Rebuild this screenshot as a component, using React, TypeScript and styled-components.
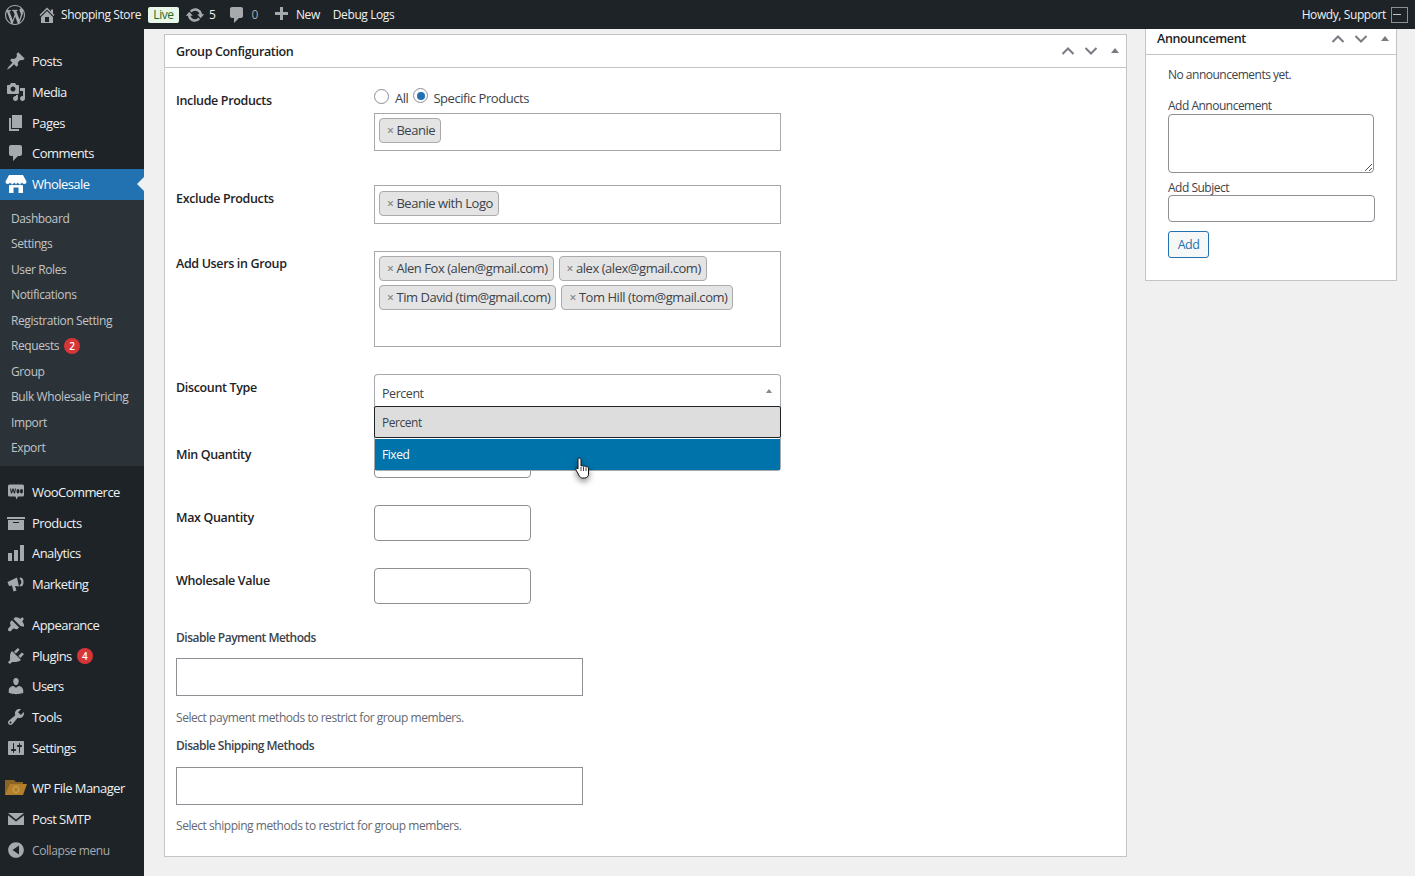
import React from "react";
import styled, { createGlobalStyle } from "styled-components";

const GlobalStyle = createGlobalStyle`
  html, body {
    margin: 0;
    padding: 0;
    height: 100%;
    background: #f0f0f1;
  }
  body {
    font-family: "Open Sans", "Noto Sans", "Liberation Sans", sans-serif;
    font-size: 13px;
    letter-spacing: -0.45px;
    color: #3c434a;
    overflow: hidden;
  }
  * { box-sizing: border-box; }
`;

const Page = styled.div`
  width: 1415px;
  height: 876px;
  overflow: hidden;
  position: relative;
`;

/* admin bar */
const AdminBar = styled.div`
  height: 29px;
  background: #1d2327;
  display: flex;
  align-items: center;
  padding: 0 7px 0 5px;
  color: #f0f0f1;
  font-size: 12px;
  letter-spacing: -0.4px;
`;
const BarItem = styled.div<{ $gap?: number; $left?: number }>`
  display: flex;
  align-items: center;
  gap: ${(p) => p.$gap ?? 5}px;
  margin-left: ${(p) => p.$left ?? 0}px;
  white-space: nowrap;
`;
const BarMuted = styled.span`
  color: #a7aaad;
`;
const LiveBadge = styled.span`
  background: #e9f6ea;
  color: #1e6b2a;
  border-radius: 2px;
  height: 16px;
  width: 31px;
  line-height: 15px;
  text-align: center;
  margin-left: 7px;
`;
const Spacer = styled.div`
  flex: 1;
`;
const Avatar = styled.div`
  width: 17px;
  height: 16px;
  border: 1px solid #8c8f94;
  background: #1d2327;
  display: flex;
  align-items: center;
  padding-left: 1px;
  margin-left: 5px;
  &::before {
    content: "";
    width: 8px;
    height: 1px;
    background: #c3c4c7;
  }
`;

const Body = styled.div`
  display: flex;
  height: 847px;
`;

/* sidebar */
const Sidebar = styled.nav`
  width: 144px;
  flex-shrink: 0;
  background: #1d2327;
  padding-top: 16.75px;
`;
const MenuItem = styled.div<{ $active?: boolean; $gapTop?: number; $muted?: boolean }>`
  height: 30.75px;
  margin-top: ${(p) => p.$gapTop ?? 0}px;
  display: flex;
  align-items: center;
  position: relative;
  background: ${(p) => (p.$active ? "#2271b1" : "transparent")};
  color: ${(p) => (p.$active ? "#fff" : p.$muted ? "#a7aaad" : "#f0f0f1")};
  font-size: ${(p) => (p.$muted ? 12 : 13)}px;
  letter-spacing: ${(p) => (p.$muted ? -0.4 : -0.55)}px;
  ${(p) =>
    p.$active &&
    `&::after {
      content: "";
      position: absolute;
      right: 0;
      top: 50%;
      margin-top: -7px;
      border: 7px solid transparent;
      border-right-color: #f0f0f1;
      border-left: 0;
    }`}
`;
const MenuIcon = styled.span`
  width: 32px;
  height: 20px;
  flex-shrink: 0;
  display: flex;
  justify-content: center;
`;
const CollapseLabel = styled.span`
  margin-top: 2px;
`;
const Count = styled.span`
  width: 16px;
  height: 16px;
  border-radius: 50%;
  background: #d63638;
  color: #fff;
  font-size: 10px;
  font-weight: 600;
  line-height: 16px;
  text-align: center;
  letter-spacing: 0;
  margin-left: 5px;
`;
const SubMenu = styled.div`
  background: #2c3338;
  padding: 5.85px 0 5.65px;
  margin-bottom: 10.4px;
`;
const SubItem = styled.div`
  height: 25.5px;
  padding-left: 11px;
  display: flex;
  align-items: center;
  color: #c3c4c7;
  font-size: 12px;
  letter-spacing: -0.4px;
`;

/* content */
const Content = styled.main`
  flex: 1;
  display: flex;
  align-items: flex-start;
  padding-left: 20px;
  gap: 18px;
`;
const MainBox = styled.section`
  width: 963px;
  height: 823px;
  margin-top: 5px;
  background: #fff;
  border: 1px solid #c3c4c7;
`;
const SideBox = styled.aside`
  width: 252px;
  height: 252px;
  background: #fff;
  border: 1px solid #c3c4c7;
  border-top: 0;
`;
const BoxHeader = styled.header<{ $height: number; $lift?: number }>`
  height: ${(p) => p.$height}px;
  display: flex;
  align-items: center;
  border-bottom: 1px solid #c3c4c7;
  padding: 0 6px ${(p) => p.$lift ?? 0}px 11px;
  color: #1d2327;
  font-weight: 600;
  font-size: 12.5px;
  letter-spacing: -0.35px;
`;
const Handles = styled.div`
  margin-left: auto;
  display: flex;
  align-items: center;
  gap: 9px;
`;
const FormBody = styled.div`
  padding: 0 11px;
`;
const Row = styled.div<{ $top: number }>`
  display: grid;
  grid-template-columns: 198px 407px;
  margin-top: ${(p) => p.$top}px;
`;
const RowLabel = styled.label<{ $offset: number }>`
  font-weight: 600;
  font-size: 12.5px;
  letter-spacing: -0.35px;
  color: #1d2327;
  padding-top: ${(p) => p.$offset}px;
  line-height: 16px;
`;
const RadioLine = styled.div`
  display: flex;
  align-items: flex-start;
  height: 25px;
  color: #3c434a;
`;
const Radio = styled.span<{ $checked?: boolean; $raise?: number }>`
  width: 15px;
  height: 15px;
  border-radius: 50%;
  border: 1px solid #8c8f94;
  background: #fff;
  position: relative;
  top: ${(p) => 1 - (p.$raise ?? 0)}px;
  margin-right: ${(p) => (p.$checked ? 5 : 6)}px;
  ${(p) =>
    p.$checked &&
    `&::before {
      content: "";
      position: absolute;
      left: 2.5px;
      top: 2.5px;
      width: 8px;
      height: 8px;
      border-radius: 50%;
      background: #2271b1;
    }`}
`;
const RadioText = styled.span`
  line-height: 18px;
  margin-top: 1px;
  margin-right: 5px;
`;
const TagBox = styled.div<{ $height: number; $padTop?: number }>`
  height: ${(p) => p.$height}px;
  border: 1px solid #a7aaad;
  background: #fff;
  padding: ${(p) => p.$padTop ?? 4}px 4px 4px;
  display: flex;
  flex-wrap: wrap;
  align-content: flex-start;
  gap: 4px 5px;
`;
const Tag = styled.span`
  height: 25px;
  background: #e4e4e4;
  border: 1px solid #aaa;
  border-radius: 4px;
  padding: 0 5px 0 7px;
  display: flex;
  align-items: center;
  line-height: 1;
  color: #3c434a;
`;
const TagX = styled.span`
  color: #888;
  font-size: 12px;
  margin-right: 3px;
  font-weight: 600;
`;
const SelectWrap = styled.div`
  position: relative;
  height: 32px;
`;
const SelectHead = styled.div`
  height: 32px;
  border: 1px solid #a7aaad;
  border-bottom: 0;
  border-radius: 4px 4px 0 0;
  background: #fff;
  padding: 6px 8px 0 7px;
  display: flex;
  align-items: center;
  justify-content: space-between;
  font-size: 12.5px;
`;
const Caret = styled.span`
  width: 0;
  height: 0;
  border: 3px solid transparent;
  border-bottom: 4px solid #888;
  border-top: 0;
  position: relative;
  top: -3px;
`;
const Dropdown = styled.div`
  position: absolute;
  left: 0;
  right: 0;
  top: 32px;
  height: 65px;
  background: #fff;
  border: 1px solid #a7aaad;
  border-top: 0;
  border-radius: 0 0 4px 4px;
  z-index: 2;
  font-size: 12px;
`;
const Option = styled.div<{ $focus?: boolean; $hover?: boolean }>`
  height: ${(p) => (p.$focus ? 32 : 31)}px;
  display: flex;
  align-items: center;
  padding-left: 7px;
  margin-bottom: ${(p) => (p.$focus ? 1 : 0)}px;
  background: ${(p) => (p.$hover ? "#0073aa" : "#ddd")};
  color: ${(p) => (p.$hover ? "#fff" : "#3c434a")};
  border: ${(p) => (p.$focus ? "1px solid #1d2327" : "0")};
  border-radius: ${(p) => (p.$focus ? "2px" : "0")};
  margin-left: ${(p) => (p.$focus ? "-1px" : "0")};
  margin-right: ${(p) => (p.$focus ? "-1px" : "0")};
`;
const Cursor = styled.svg`
  position: absolute;
  left: 201px;
  top: 82px;
  z-index: 3;
  filter: drop-shadow(0 3px 3px rgba(0, 0, 0, 0.45));
`;
const NumberInput = styled.div`
  width: 157px;
  height: 36px;
  border: 1px solid #8c8f94;
  border-radius: 4px;
  background: #fff;
`;
const BlockLabel = styled.div<{ $top: number }>`
  font-weight: 600;
  font-size: 12px;
  letter-spacing: -0.5px;
  color: #3c434a;
  line-height: 16px;
  margin-top: ${(p) => p.$top}px;
`;
const WideInput = styled.div<{ $top: number }>`
  width: 407px;
  height: 38px;
  border: 1px solid #8c8f94;
  background: #fff;
  margin-top: ${(p) => p.$top}px;
`;
const Help = styled.p<{ $top: number }>`
  margin: ${(p) => p.$top}px 0 0;
  font-size: 12px;
  letter-spacing: -0.45px;
  line-height: 16px;
  color: #646970;
`;

/* announcement */
const SideBody = styled.div`
  padding: 12px 22px 0;
  font-size: 12px;
  letter-spacing: -0.5px;
`;
const SideText = styled.p`
  margin: 0;
  line-height: 16px;
`;
const SideLabel = styled.div<{ $top: number }>`
  line-height: 16px;
  margin-top: ${(p) => p.$top}px;
`;
const Textarea = styled.div`
  width: 206px;
  height: 59px;
  border: 1px solid #8c8f94;
  border-radius: 4px;
  background: #fff;
  position: relative;
`;
const Grip = styled.svg`
  position: absolute;
  right: 0;
  bottom: 0;
`;
const SubjectInput = styled.div`
  width: 207px;
  height: 27px;
  margin-top: -1px;
  border: 1px solid #8c8f94;
  border-radius: 4px;
  background: #fff;
`;
const AddButton = styled.button`
  display: block;
  width: 41px;
  height: 27px;
  margin-top: 9px;
  padding: 0;
  border: 1px solid #2271b1;
  border-radius: 3px;
  background: #f6f7f7;
  color: #2271b1;
  font: inherit;
  font-size: 12.5px;
  letter-spacing: inherit;
`;
const HandleTriangleIcon = styled.svg`
  margin-left: 3px;
`;

const ICON = "#a7aaad";

const Ico = ({ d, size = 20, fill = ICON }: { d: string; size?: number; fill?: string }) => (
  <svg width={size} height={size} viewBox="0 0 20 20" fill={fill} fillRule="evenodd">
    <path d={d} />
  </svg>
);

const icons = {
  posts: "M10.44 3.02l1.82-1.82 6.36 6.35-1.83 1.82c-1.05-.68-2.48-.57-3.41.36l-.75.75c-.92.93-1.04 2.35-.35 3.41l-1.83 1.82-2.41-2.41-2.8 2.79c-.42.42-3.38 2.71-3.8 2.29s1.86-3.39 2.28-3.81l2.79-2.79L4.1 9.36l1.83-1.82c1.05.69 2.48.57 3.4-.36l.75-.75c.93-.92 1.04-2.35.36-3.41z",
  media: "M13 11V4c0-.55-.45-1-1-1h-1.67L9 1H5L3.67 3H2c-.55 0-1 .45-1 1v7c0 .55.45 1 1 1h10c.55 0 1-.45 1-1zM7 4.5c1.38 0 2.5 1.12 2.5 2.5S8.38 9.5 7 9.5 4.5 8.38 4.5 7 5.62 4.5 7 4.5zM14 6h5v10.5c0 1.38-1.12 2.5-2.5 2.5S14 17.88 14 16.5s1.12-2.5 2.5-2.5c.17 0 .34.02.5.05V9h-3V6zm-4 8.05V13h2v3.5c0 1.38-1.12 2.5-2.5 2.5S7 17.88 7 16.5 8.12 14 9.5 14c.17 0 .34.02.5.05z",
  pages: "M6 15V2h10v13H6zm-1 1h8v2H3V5h2v11z",
  comments: "M5 2h9c1.1 0 2 .9 2 2v7c0 1.1-.9 2-2 2h-2l-5 5v-5H5c-1.1 0-2-.9-2-2V4c0-1.1.9-2 2-2z",
  woo: "M3.5 2.500h13A1.500 1.500 0 0118 4v9a1.500 1.500 0 01-1.500 1.500H12l-1.500 3-1-3h-6A1.500 1.500 0 012 13V4a1.500 1.500 0 011.500-1.500zM4 6.500l1 5h1l1-3 1 3h1l1-5H9l-.5 3-1-3h-1l-1 3-.5-3zM12 7a1.500 2.200 0 100 4.400A1.500 2.200 0 0012 7zm3.500 0a1.500 2.200 0 100 4.400 1.500 2.200 0 000-4.400z",
  products: "M19 4v2H1V4h18zM2 7h16v10H2V7zm11 3V9H7v1h6z",
  analytics: "M18 18V2h-4v16h4zm-6 0V7H8v11h4zm-6 0v-8H2v8h4z",
  marketing: "M1.500 8L11 3.500l2 9-4-.5 1.500 4.500-3 1L6 11.500l-3 .5zM14 3.500a3.500 4.500 0 010 9l-.4-1.800a1.800 2.700 0 000-5.400z",
  appearance: "M14.48 11.06L7.41 3.99l1.5-1.5c.5-.56 2.3-.47 3.54.32.39.25.77.5 1.15.74.17.12.35.19.51.19.18 0 .36-.07.51-.22.55-.56 1.23-1.1 1.94-1.01.32.04.53.12.64.16l.19.63c.04.11.12.32.16.64.09.7-.45 1.39-1.01 1.94-.37.37-.15.82.09 1.18.24.38.49.76.74 1.15.79 1.24.88 3.04.32 3.54zM13.06 12.48l-1.5 1.500c-.56.500-2.360.410-3.600-.380-.8-.500-1.300.500-2.300 1.700l-.74.74c-.58.58-1.520.600-2.100.020l-.5-.5c-.58-.58-.56-1.520.020-2.100l2.440-3.040c-.79-1.240-.88-3.040-.38-3.600l1.500-1.500z",
  plugins: "M13.11 4.36L9.87 7.6 8 5.73l3.24-3.24c.35-.34 1.05-.2 1.56.32.52.51.66 1.21.31 1.55zm-8 1.77l.91-1.12 9.01 9.01-1.19.84c-.71.71-2.63 1.16-3.82 1.16H6.14L4.9 17.26c-.59.59-1.54.59-2.12 0-.59-.58-.59-1.53 0-2.12l1.24-1.24v-3.88c0-1.13.45-3.06 1.09-3.89zm7.26 3.97l3.24-3.24c.34-.35 1.04-.21 1.55.31.52.51.66 1.21.31 1.55l-3.24 3.25z",
  users: "M10 9.25c-2.27 0-2.73-3.44-2.73-3.44C7 4.02 7.82 2 9.97 2c2.16 0 2.98 2.02 2.71 3.81 0 0-.41 3.44-2.68 3.44zm0 2.57L12.72 10c2.39 0 4.52 2.33 4.52 4.53v2.49s-3.65 1.13-7.24 1.13c-3.65 0-7.24-1.13-7.24-1.13v-2.49c0-2.25 1.94-4.48 4.47-4.48z",
  tools: "M16.68 9.77c-1.34 1.34-3.3 1.67-4.95.99l-5.41 6.52c-.99.99-2.59.99-3.58 0s-.99-2.59 0-3.57l6.52-5.42c-.68-1.65-.35-3.61.99-4.95 1.28-1.28 3.12-1.62 4.72-1.06l-2.89 2.89 2.82 2.82 2.86-2.87c.53 1.58.18 3.39-1.08 4.65zM3.81 16.21c.4.39 1.03.39 1.42 0 .4-.4.4-1.03 0-1.43-.39-.39-1.02-.39-1.42 0-.4.4-.4 1.03 0 1.43z",
  settings: "M18 16V4c0-.55-.45-1-1-1H3c-.55 0-1 .45-1 1v12c0 .55.45 1 1 1h14c.55 0 1-.45 1-1zM8 11h1c.55 0 1 .45 1 1s-.45 1-1 1H8v1.5c0 .28-.22.5-.5.5s-.5-.22-.5-.5V13H6c-.55 0-1-.45-1-1s.45-1 1-1h1V5.5c0-.28.22-.5.5-.5s.5.22.5.5V11zm5-2h-1c-.55 0-1-.45-1-1s.45-1 1-1h1V5.5c0-.28.22-.5.5-.5s.5.22.5.5V7h1c.55 0 1 .45 1 1s-.45 1-1 1h-1v5.5c0 .28-.22.5-.5.5s-.5-.22-.5-.5V9z",
  smtp: "M2 4h16L10 10.500zM2 6.200l8 6.300 8-6.300V16H2z",
  collapse: "M10 2.160c4.330 0 7.840 3.510 7.840 7.840s-3.510 7.840-7.840 7.840S2.160 14.330 2.160 10 5.670 2.160 10 2.160zM13 5.500L6.500 10l6.500 4.500z",
  home: "M16 8.5l1.53 1.53-1.06 1.06L10 4.62l-6.47 6.47-1.06-1.06L10 2.5l4 4v-2h2v4zm-6-2.46l6 5.99V18H4v-5.97zM12 17v-5H8v5h4z",
  comment: "M5 2h9c1.1 0 2 .9 2 2v7c0 1.1-.9 2-2 2h-2l-5 5v-5H5c-1.1 0-2-.9-2-2V4c0-1.1.9-2 2-2z",
  plus: "M17 7v3h-5v5H9v-5H4V7h5V2h3v5h5z",
  updates: "M10.2 3.28c3.53 0 6.43 2.61 6.92 6h2.08l-3.5 4-3.5-4h2.32c-.45-1.97-2.21-3.44-4.32-3.44-1.45 0-2.73.71-3.54 1.78L4.95 5.66C6.23 4.2 8.11 3.28 10.2 3.28zm-.4 13.44c-3.52 0-6.43-2.61-6.92-6H.8l3.5-4c1.17 1.33 2.33 2.67 3.5 4H5.48c.45 1.97 2.21 3.44 4.32 3.44 1.45 0 2.73-.71 3.54-1.77l1.71 1.95c-1.28 1.46-3.15 2.38-5.25 2.38z",
  wp: "M20 10c0-5.51-4.49-10-10-10C4.48 0 0 4.49 0 10c0 5.52 4.48 10 10 10 5.51 0 10-4.48 10-10zM7.78 15.37L4.37 6.22c.55-.02 1.17-.08 1.17-.08.5-.06.44-1.13-.06-1.11 0 0-1.45.11-2.37.11-.18 0-.37 0-.58-.01C4.12 2.69 6.88 1.11 10 1.11c2.33 0 4.45.87 6.05 2.34-.68-.11-1.65.39-1.65 1.58 0 .74.45 1.36.9 2.1.35.61.55 1.36.55 2.46 0 1.49-1.4 5-1.4 5l-3.03-8.37c.54-.02.82-.17.82-.17.5-.05.44-1.25-.06-1.22 0 0-1.44.12-2.38.12-.87 0-2.33-.12-2.33-.12-.5-.03-.56 1.2-.06 1.22l.92.08 1.26 3.41zM17.41 10c.24-.64.74-1.87.43-4.25.7 1.29 1.05 2.71 1.05 4.25 0 3.29-1.73 6.24-4.4 7.78.97-2.59 1.94-5.2 2.92-7.78zM6.1 18.09C3.12 16.65 1.11 13.53 1.11 10c0-1.3.23-2.48.72-3.59C3.25 10.3 4.67 14.2 6.1 18.09zm4.03-6.63l2.58 6.98c-.86.29-1.76.45-2.71.45-.79 0-1.57-.11-2.29-.33.81-2.38 1.62-4.74 2.42-7.1z",
};

const StoreIcon = () => (
  <svg width={22} height={20} viewBox="0 0 22 20" fill="#fff">
    <path d="M4 1h14l3.500 6.500c0 1.800-1.100 2.500-2.300 2.500-1.100 0-2-.7-2.200-1.700-.3 1-1.100 1.700-2.200 1.700S12.800 9.300 12.600 8.300c-.3 1-1 1.700-1.600 1.700s-1.300-.7-1.600-1.700C9.200 9.300 8.300 10 7.200 10S5.300 9.300 5 8.300C4.800 9.300 3.900 10 2.800 10 1.600 10 .5 9.300.5 7.500z" />
    <path fillRule="evenodd" d="M4 11.200c1 .2 2 0 3-.6 1.200.7 2.800.7 4 .1 1.200.6 2.800.6 4-.1 1 .6 2 .8 3 .6V19h-4.500v-5.500h-5V19H4z" />
  </svg>
);

const FolderIcon = () => (
  <svg width={24} height={20} viewBox="0 0 24 20">
    <path d="M1 2h9l2 2h7v12H1z" fill="#8a6422" />
    <path d="M6 6h17l-4 11H1z" fill="#b37f2a" />
    <circle cx="12" cy="11.500" r="3" fill="none" stroke="#d0a85c" strokeWidth="1" />
  </svg>
);

const HandleChevron = ({ down }: { down?: boolean }) => (
  <svg width={14} height={14} viewBox="0 0 14 14" fill="none" stroke="#787c82" strokeWidth="2">
    <path d={down ? "M1.500 4l5.500 5.500L12.500 4" : "M1.500 10L7 4.500l5.500 5.500"} />
  </svg>
);
const HandleTriangle = () => (
  <HandleTriangleIcon width={10} height={8} viewBox="0 0 10 8" fill="#787c82">
    <path d="M5 1l4 5H1z" />
  </HandleTriangleIcon>
);

const topMenu: [string, keyof typeof icons][] = [
  ["Posts", "posts"],
  ["Media", "media"],
  ["Pages", "pages"],
  ["Comments", "comments"],
];
const subMenu = [
  "Dashboard",
  "Settings",
  "User Roles",
  "Notifications",
  "Registration Setting",
  "Requests",
  "Group",
  "Bulk Wholesale Pricing",
  "Import",
  "Export",
];

const Tags = ({ items }: { items: string[] }) => (
  <>
    {items.map((t) => (
      <Tag key={t}>
        <TagX>×</TagX>
        {t}
      </Tag>
    ))}
  </>
);

const Item = ({ label, icon, gapTop, count }: { label: string; icon: keyof typeof icons; gapTop?: number; count?: number }) => (
  <MenuItem $gapTop={gapTop}>
    <MenuIcon>
      <Ico d={icons[icon]} />
    </MenuIcon>
    {label}
    {count ? <Count>{count}</Count> : null}
  </MenuItem>
);

export default function App() {
  return (
    <Page>
      <GlobalStyle />
      <AdminBar>
        <Ico d={icons.wp} />
        <BarItem $left={12} $gap={4}>
          <Ico d={icons.home} />
          Shopping Store
        </BarItem>
        <LiveBadge>Live</LiveBadge>
        <BarItem $left={6} $gap={4}>
          <Ico d={icons.updates} />5
        </BarItem>
        <BarItem $left={12} $gap={4}>
          <Ico d={icons.comment} />
          <BarMuted>0</BarMuted>
        </BarItem>
        <BarItem $left={13} $gap={5}>
          <Ico d={icons.plus} />
          New
        </BarItem>
        <BarItem $left={13}>Debug Logs</BarItem>
        <Spacer />
        <BarItem>Howdy, Support</BarItem>
        <Avatar />
      </AdminBar>
      <Body>
        <Sidebar>
          {topMenu.map(([label, icon]) => (
            <Item key={label} label={label} icon={icon} />
          ))}
          <MenuItem $active>
            <MenuIcon>
              <StoreIcon />
            </MenuIcon>
            Wholesale
          </MenuItem>
          <SubMenu>
            {subMenu.map((s) => (
              <SubItem key={s}>
                {s}
                {s === "Requests" ? <Count>2</Count> : null}
              </SubItem>
            ))}
          </SubMenu>
          <Item label="WooCommerce" icon="woo" />
          <Item label="Products" icon="products" />
          <Item label="Analytics" icon="analytics" />
          <Item label="Marketing" icon="marketing" />
          <Item label="Appearance" icon="appearance" gapTop={10} />
          <Item label="Plugins" icon="plugins" count={4} />
          <Item label="Users" icon="users" />
          <Item label="Tools" icon="tools" />
          <Item label="Settings" icon="settings" />
          <MenuItem $gapTop={9.5}>
            <MenuIcon>
              <FolderIcon />
            </MenuIcon>
            WP File Manager
          </MenuItem>
          <Item label="Post SMTP" icon="smtp" />
          <MenuItem $muted>
            <MenuIcon>
              <Ico d={icons.collapse} />
            </MenuIcon>
            <CollapseLabel>Collapse menu</CollapseLabel>
          </MenuItem>
        </Sidebar>
        <Content>
          <MainBox>
            <BoxHeader $height={33}>
              Group Configuration
              <Handles>
                <HandleChevron />
                <HandleChevron down />
                <HandleTriangle />
              </Handles>
            </BoxHeader>
            <FormBody>
              <Row $top={20}>
                <RowLabel $offset={5}>Include Products</RowLabel>
                <div>
                  <RadioLine>
                    <Radio />
                    <RadioText>All</RadioText>
                    <Radio $checked $raise={1} />
                    <RadioText>Specific Products</RadioText>
                  </RadioLine>
                  <TagBox $height={38}>
                    <Tags items={["Beanie"]} />
                  </TagBox>
                </div>
              </Row>
              <Row $top={34}>
                <RowLabel $offset={6}>Exclude Products</RowLabel>
                <TagBox $height={39} $padTop={5}>
                  <Tags items={["Beanie with Logo"]} />
                </TagBox>
              </Row>
              <Row $top={27}>
                <RowLabel $offset={5}>Add Users in Group</RowLabel>
                <TagBox $height={96}>
                  <Tags
                    items={[
                      "Alen Fox (alen@gmail.com)",
                      "alex (alex@gmail.com)",
                      "Tim David (tim@gmail.com)",
                      "Tom Hill (tom@gmail.com)",
                    ]}
                  />
                </TagBox>
              </Row>
              <Row $top={27}>
                <RowLabel $offset={6}>Discount Type</RowLabel>
                <SelectWrap>
                  <SelectHead>
                    Percent
                    <Caret />
                  </SelectHead>
                  <Dropdown>
                    <Option $focus>Percent</Option>
                    <Option $hover>Fixed</Option>
                  </Dropdown>
                  <Cursor width={18} height={24} viewBox="0 0 18 24">
                    <path
                      d="M4 2c1 0 2 .8 2 2v6c1-.4 2-.3 2.500.3 1-.4 2-.2 2.500.5 1-.3 2.300 0 2.500 1.200V18c0 2.500-1.500 4-4 4H7.500c-1.500 0-2.500-1-3.200-2L1 14c-.5-1 .3-2 1.300-1.800L3 13V4c0-1.200 0-2 1-2z"
                      fill="#fff"
                      stroke="#111"
                      strokeWidth="1"
                    />
                    <path d="M6 11v4M8.500 11v4M11 11.500V15" stroke="#111" strokeWidth=".8" />
                  </Cursor>
                </SelectWrap>
              </Row>
              <Row $top={36}>
                <RowLabel $offset={5}>Min Quantity</RowLabel>
                <NumberInput />
              </Row>
              <Row $top={27}>
                <RowLabel $offset={5}>Max Quantity</RowLabel>
                <NumberInput />
              </Row>
              <Row $top={27}>
                <RowLabel $offset={5}>Wholesale Value</RowLabel>
                <NumberInput />
              </Row>
              <BlockLabel $top={26}>Disable Payment Methods</BlockLabel>
              <WideInput $top={12} />
              <Help $top={14}>Select payment methods to restrict for group members.</Help>
              <BlockLabel $top={12}>Disable Shipping Methods</BlockLabel>
              <WideInput $top={13} />
              <Help $top={13}>Select shipping methods to restrict for group members.</Help>
            </FormBody>
          </MainBox>
          <SideBox>
            <BoxHeader $height={26} $lift={6}>
              Announcement
              <Handles>
                <HandleChevron />
                <HandleChevron down />
                <HandleTriangle />
              </Handles>
            </BoxHeader>
            <SideBody>
              <SideText>No announcements yet.</SideText>
              <SideLabel $top={15}>Add Announcement</SideLabel>
              <Textarea>
                <Grip width={10} height={10} viewBox="0 0 10 10" stroke="#555" strokeWidth="1">
                  <path d="M2 9l7-7M6 9l3-3" />
                </Grip>
              </Textarea>
              <SideLabel $top={7}>Add Subject</SideLabel>
              <SubjectInput />
              <AddButton>Add</AddButton>
            </SideBody>
          </SideBox>
        </Content>
      </Body>
    </Page>
  );
}
